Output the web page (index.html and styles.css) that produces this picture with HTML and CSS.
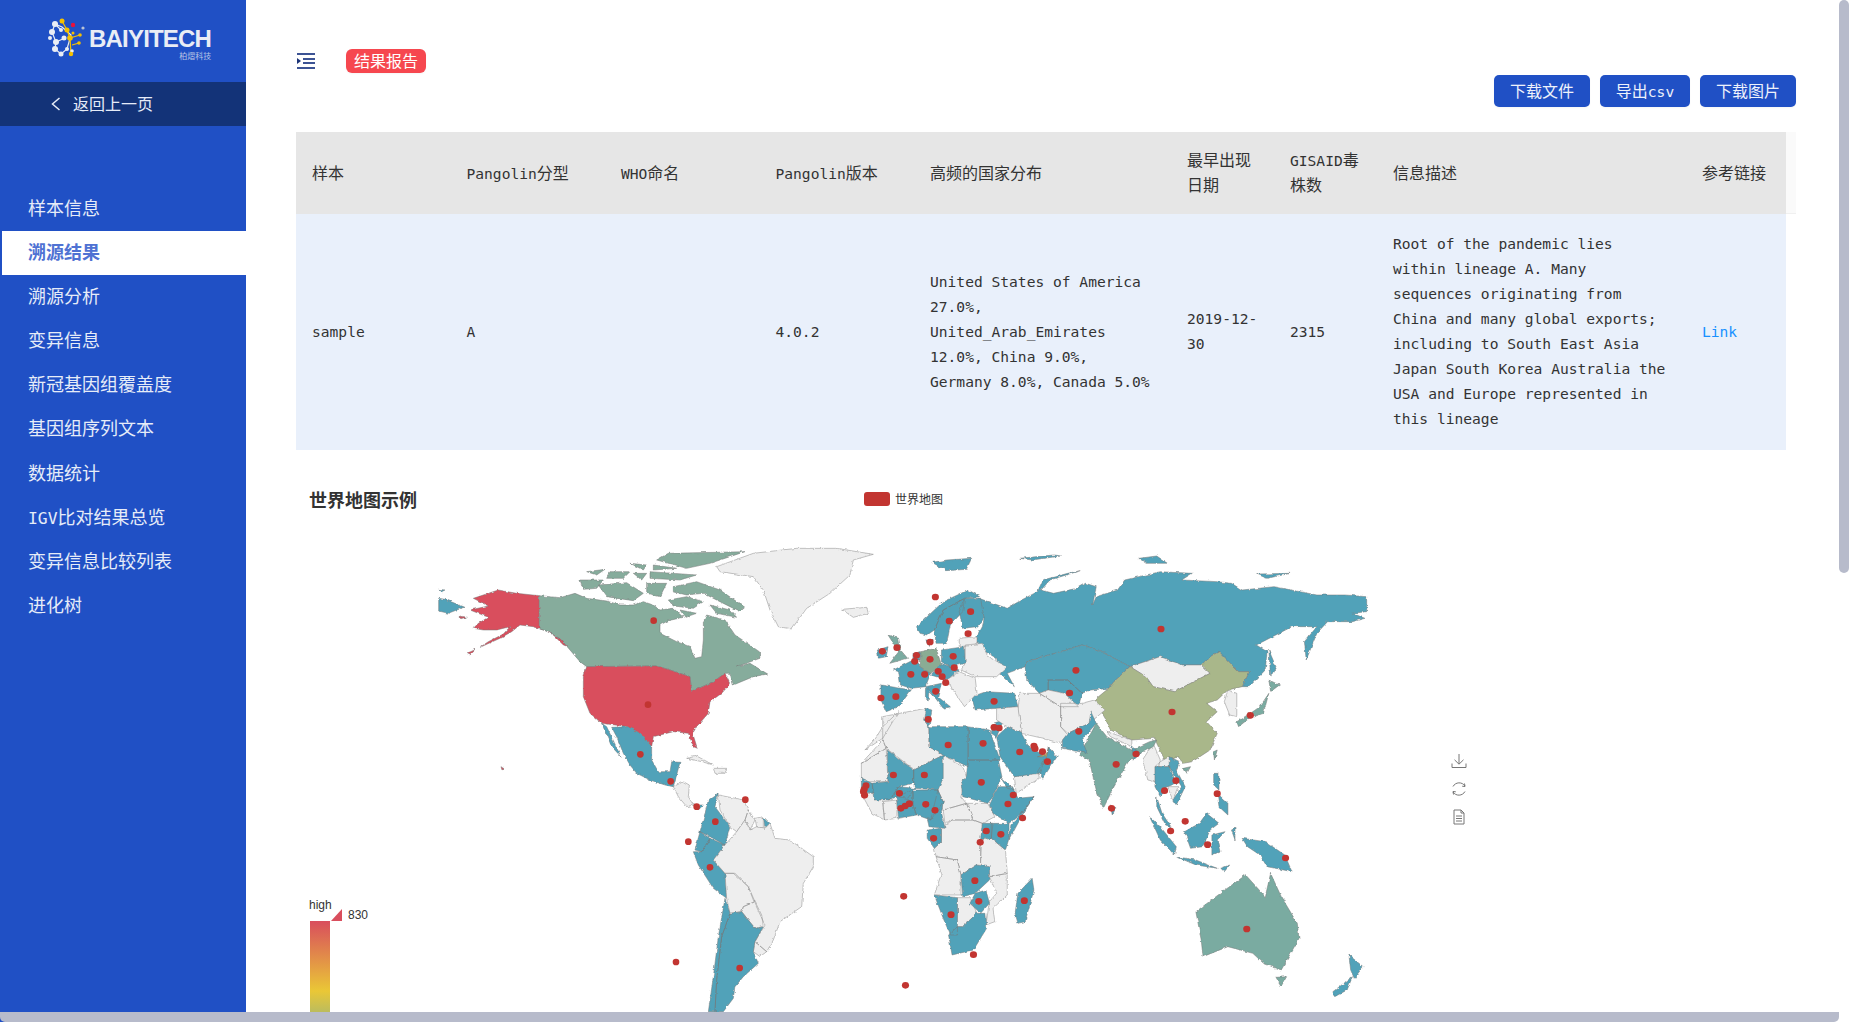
FILE: index.html
```html
<!DOCTYPE html>
<html lang="zh-CN">
<head>
<meta charset="utf-8">
<title>结果报告</title>
<link rel="stylesheet" href="styles.css">
</head>
<body>
<div class="app">
  <aside class="sidebar">
    <div class="logo">
      <svg class="logo-mark" viewBox="0 0 40 42" width="40" height="42">
        <g class="logo-w-l"><path d="M8 6 5 14 9 24 8 31 14 36 20 31 24 17 15 9ZM8 6 14 12M9 24 18 20"/></g>
        <g class="logo-y-l"><path d="M15 3 20 12 23 20 24 36M23 20 33 17M25 27 32 25"/></g>
        <g class="logo-w"><circle cx="8" cy="6" r="3"/><circle cx="5" cy="14" r="3"/><circle cx="9" cy="24" r="3"/><circle cx="3" cy="20" r="2"/><circle cx="8" cy="31" r="3"/><circle cx="14" cy="36" r="2.5"/><circle cx="20" cy="31" r="2"/><circle cx="17" cy="20" r="2.5"/><circle cx="14" cy="12" r="2"/><circle cx="25" cy="33" r="1.8"/></g>
        <g class="logo-y"><circle cx="15" cy="3" r="2.5"/><circle cx="20" cy="12" r="2.5"/><circle cx="23" cy="20" r="2.8"/><circle cx="24" cy="36" r="2.2"/><circle cx="33" cy="17" r="1.8"/><circle cx="32" cy="25" r="1.8"/><circle cx="26" cy="15" r="1.5"/></g>
        <circle class="logo-r" cx="26" cy="7" r="2.2"/>
        <circle class="logo-g" cx="36" cy="10" r="1.6"/>
      </svg>
      <div class="logo-words">
        <span class="logo-name">BAIYITECH</span>
        <span class="logo-sub">柏熠科技</span>
      </div>
    </div>
    <div class="back">
      <svg class="back-icon" viewBox="0 0 10 14" width="10" height="14"><path d="M8.5 1 1.5 7l7 6"/></svg>
      <span class="back-text">返回上一页</span>
    </div>
    <nav class="menu">
      <a class="menu-item">样本信息</a>
      <a class="menu-item active">溯源结果</a>
      <a class="menu-item">溯源分析</a>
      <a class="menu-item">变异信息</a>
      <a class="menu-item">新冠基因组覆盖度</a>
      <a class="menu-item">基因组序列文本</a>
      <a class="menu-item">数据统计</a>
      <a class="menu-item"><span class="lat">IGV</span>比对结果总览</a>
      <a class="menu-item">变异信息比较列表</a>
      <a class="menu-item">进化树</a>
    </nav>
  </aside>

  <main class="main">
    <div class="topbar">
      <svg class="toggle" viewBox="0 0 18 16" width="18" height="16">
        <path class="toggle-lines" d="M0 0h18v2H0zM6 5h12v2H6zM6 9h12v2H6zM0 14h18v2H0z"/>
        <path class="toggle-arrow" d="M0 5v6l4-3z"/>
      </svg>
      <span class="badge"><span class="badge-text">结果报告</span></span>
    </div>
    <div class="actions">
      <button class="btn"><span class="btn-text">下载文件</span></button>
      <button class="btn btn-mid"><span class="btn-text">导出<span class="lat">csv</span></span></button>
      <button class="btn"><span class="btn-text">下载图片</span></button>
    </div>

    <div class="table-head">
      <table class="table">
        <colgroup><col class="w154"><col class="w154"><col class="w154"><col class="w154"><col class="w257"><col class="w103"><col class="w103"><col class="w309"><col class="w100"></colgroup>
        <thead>
          <tr><th>样本</th><th><span class="lat">Pangolin</span>分型</th><th><span class="lat">WHO</span>命名</th><th><span class="lat">Pangolin</span>版本</th><th>高频的国家分布</th><th>最早出现日期</th><th><span class="lat">GISAID</span>毒<br>株数</th><th>信息描述</th><th>参考链接</th></tr>
        </thead>
      </table>
    </div>
    <table class="table table-body">
      <colgroup><col class="w154"><col class="w154"><col class="w154"><col class="w154"><col class="w257"><col class="w103"><col class="w103"><col class="w309"><col class="w100"></colgroup>
      <tbody>
        <tr>
          <td>sample</td><td>A</td><td></td><td>4.0.2</td>
          <td>United States of America 27.0%, United_Arab_Emirates 12.0%, China 9.0%, Germany 8.0%, Canada 5.0%</td>
          <td>2019-12-30</td><td>2315</td>
          <td>Root of the pandemic lies within lineage A. Many sequences originating from China and many global exports; including to South East Asia Japan South Korea Australia the USA and Europe represented in this lineage</td>
          <td><a class="link">Link</a></td>
        </tr>
      </tbody>
    </table>

    <section class="chart">
      <h3 class="chart-title">世界地图示例</h3>
      <div class="legend"><i class="legend-swatch"></i><span>世界地图</span></div>

      <svg class="map" viewBox="420 530 980 482" width="980" height="482">
        <defs>
          <filter id="rough" x="-3%" y="-3%" width="106%" height="106%" color-interpolation-filters="sRGB">
            <feTurbulence type="fractalNoise" baseFrequency=".07" numOctaves="3" seed="4" result="n"/>
            <feDisplacementMap in="SourceGraphic" in2="n" scale="9" xChannelSelector="R" yChannelSelector="G"/>
          </filter>
        </defs>
        <!-- Americas -->
        <g transform="translate(420 530) scale(.33333)">
          <g class="rough">
          <path class="low" d="M56 205 75 208 135 232 110 240 85 250 56 243ZM56 178 75 180 65 185Z"/>
          <path class="red" d="M358 197V296L385 305 420 325 445 350 430 345 400 315 370 298 340 290 300 285 275 305 240 325 180 352 205 335 250 312 270 290 230 300 190 300 160 295 175 280 205 262 150 240 205 228 160 205 235 180 290 190ZM120 258 142 262 125 266ZM142 368 165 358 150 372ZM243 710 252 716 246 720Z"/>
          <path class="can" d="M358 197 420 203 465 190 500 205 560 213 600 225 640 225 670 215 700 225 720 240 760 235 790 262 745 272 720 285 720 310 770 335 810 350 825 385 845 380 850 330 850 275 860 255 915 270 925 285 945 315 975 335 1018 365 1020 385 950 410 990 400 1043 432 1000 440 940 465 930 430 915 430 880 455 815 485 810 440 750 420 710 408 500 410 480 395 450 360 420 325 385 305 358 296Z"/>
          <path class="can" d="M760 170 830 155 900 180 975 232 960 245 900 215 850 190 800 195 760 185ZM535 165 620 158 670 190 640 212 560 200ZM480 150 550 150 530 175 490 178ZM745 70 975 65 870 100 800 115 710 90ZM500 125 555 118 530 135ZM570 125 630 125 610 145 560 145ZM630 100 680 105 670 120ZM690 125 830 135 780 150 690 145ZM780 240 830 250 795 262ZM680 160 740 160 720 200 680 190ZM640 130 680 130 665 150ZM700 105 770 115 700 120ZM745 210 800 200 850 215 820 235 760 228ZM870 225 930 240 950 262 890 250Z"/>
          <path class="none" d="M890 110 1000 70 1130 55 1250 55 1360 73 1300 90 1290 135 1230 190 1160 235 1115 297 1075 290 1050 240 1030 180 1000 140 900 125ZM1265 238 1340 232 1345 250 1300 262ZM800 685 830 678 880 705 845 695ZM880 715 920 715 915 730 885 730ZM760 770 790 755 808 765 805 800 820 825 800 830 775 800Z"/>
          <path class="red" d="M500 410 710 408 750 420 810 440 815 485 880 455 915 430 930 462 905 490 870 515 865 550 830 590 818 610 832 655 820 650 805 610 760 605 700 620 695 650 660 610 625 590 545 580 510 550 490 500 490 440Z"/>
          <path class="low" d="M575 592 625 590 660 610 695 650 695 690 715 725 750 725 755 695 780 697 770 735 760 770 735 765 690 750 650 730 630 705 610 670 590 620ZM545 580 560 590 603 680 575 650ZM820 825 850 825 835 840Z"/>
          <path class="low" d="M895 790 885 830 930 890 915 945 870 920 840 905 855 850 865 810ZM1030 860 1050 880 1035 895ZM840 905 870 925 845 965 825 960ZM870 925 915 945 880 990 915 1030 920 1105 880 1075 835 1005 820 965 845 965Z"/>
          <path class="none" d="M895 795 970 810 985 840 975 870 950 905 930 890 900 840ZM985 840 1005 870 990 900 975 870ZM1005 865 1030 860 1030 895 1010 890Z"/>
          <path class="none" d="M950 905 975 870 990 900 1010 890 1035 895 1050 880 1065 925 1110 930 1180 980 1180 1010 1150 1060 1145 1130 1080 1175 1060 1230 1040 1265 1005 1235 1035 1185 1000 1110 985 1070 940 1030 915 1030 880 990 915 945ZM915 1030 945 1030 985 1070 1005 1115 970 1130 965 1145 930 1150 920 1105ZM970 1130 1005 1115 1025 1155 1030 1190 1005 1195 965 1145ZM1005 1235 1040 1265 1020 1280 1000 1265Z"/>
          <path class="low" d="M930 1150 965 1145 1005 1195 1030 1190 1005 1235 1000 1265 1015 1300 970 1340 945 1370 940 1405 910 1445H885L890 1350 905 1220ZM915 1105 930 1150 905 1220 890 1350 885 1445H865L880 1340 895 1220Z"/>
          </g>
          <g class="dots"><circle cx="701" cy="272" r="9"/><circle cx="684" cy="524" r="9"/><circle cx="661" cy="673" r="9"/><circle cx="752" cy="754" r="9"/><circle cx="830" cy="830" r="9"/><circle cx="886" cy="875" r="9"/><circle cx="805" cy="935" r="9"/><circle cx="870" cy="1012" r="9"/><circle cx="976" cy="809" r="9"/><circle cx="959" cy="1314" r="9"/><circle cx="768" cy="1296" r="9"/></g>
        </g>
        <!-- Europe, Africa, Asia, Oceania -->
        <g transform="translate(840 530) scale(.35587 .33333)">
          <g class="rough">
          <path class="low" d="M258 97 300 90 370 85 355 118 300 122ZM505 85 600 75 620 78 540 90ZM840 85 890 78 920 100 860 100ZM1170 132 1265 130 1200 145Z"/>
          <path class="low" d="M400 290 405 265 390 205 470 235 510 210 555 185 570 150 640 130 675 122 590 150 565 180 600 190 665 175 690 160 720 170 710 225 720 200 780 180 800 150 900 125 990 130 960 150 1060 155 1100 160 1130 180 1220 170 1340 195 1420 195 1480 200V245L1440 250 1475 265 1440 275 1370 275 1340 310 1310 390 1305 335 1340 290 1270 290 1170 345 1200 365 1195 420 1150 470 1130 470 1150 425 1120 425 1065 365 1040 380 1015 405 960 405 900 380 815 410 770 385 725 360 680 345 620 365 525 395 520 410 470 430 490 470 450 430 440 385 385 350 385 320Z"/>
          <path class="low" d="M525 395 620 365 680 345 725 360 770 385 815 410 770 455 755 475 705 480 680 490 640 450 585 450 585 480 560 490 525 450 520 410ZM585 450 640 450 680 490 670 530 630 490 585 480ZM1205 360 1225 410 1210 440Z"/>
          <path class="none" d="M815 410 900 380 960 405 1015 405 1040 430 985 460 940 485 880 470 860 440Z"/>
          <path class="china" d="M815 410 860 440 880 470 940 485 985 460 1040 430 1015 405 1040 380 1065 365 1120 425 1150 425 1130 470 1090 480 1060 510 1030 520 1060 545 1030 575 1060 610 1040 660 990 695 965 700 950 680 915 695 890 640 885 625 820 630 760 600 745 565 715 510 755 475 770 455Z"/>
          <path class="none" d="M1090 480 1115 490 1115 560 1095 555 1080 515ZM505 490 560 490 620 530 620 590 640 615 620 640 570 625 510 610 500 540ZM620 520 680 520 715 510 745 540 700 580 640 610 620 590ZM560 490 585 480 630 490 670 530 620 530ZM750 605 820 630 820 650 760 620ZM880 640 900 690 885 755 865 750 850 690ZM900 695 925 680 945 720 925 710 885 710ZM920 770 950 770 935 810Z"/>
          <path class="mid" d="M1205 450 1235 465 1210 485ZM1205 490 1190 550 1150 565 1120 590 1115 575 1160 545 1180 530ZM965 715 985 710 975 730ZM1050 665 1060 660 1052 690ZM720 580 750 620 820 660 870 635 890 630 880 650 845 670 810 695 770 770 740 835 720 780 700 690 675 675 690 640Z"/>
          <path class="low" d="M640 610 700 580 705 545 720 580 680 630 695 670 625 655 625 630ZM820 650 845 670 825 690ZM760 825 775 835 765 855ZM885 710 925 710 945 760 920 770 900 800 885 770ZM925 680 955 695 945 720 970 770 945 825 935 810 960 770 925 710ZM890 800 905 850 930 890 915 885 890 830ZM870 860 900 890 945 950 940 975 900 930ZM945 980 1000 990 1060 1015 1000 1005ZM968 905 1010 880 1030 850 1065 880 1040 900 1020 950 985 955 975 925ZM1045 915 1082 905 1060 930 1068 965 1045 975ZM1050 730 1065 730 1065 780 1050 765ZM1060 790 1090 820 1090 855 1065 830ZM1130 925 1195 935 1250 975 1270 1025 1200 1010 1180 975 1145 950ZM1070 1015 1095 1005 1080 1025ZM1100 900 1110 895 1110 930Z"/>
          <path class="mid" d="M1000 1145 1075 1085 1140 1035 1195 1100 1210 1030 1240 1100 1285 1180 1290 1225 1240 1320 1190 1300 1160 1270 1090 1250 1020 1280 1015 1230ZM1225 1342 1255 1340 1240 1368Z"/>
          <path class="low" d="M1430 1275 1470 1310 1445 1345 1435 1320ZM1440 1340 1425 1380 1390 1400 1385 1385ZM540 1045 545 1080 520 1175 500 1180 492 1150 500 1090ZM240 475 250 475 248 510 240 505Z"/>
          <path class="low" d="M215 290 245 260 290 215 360 180 395 200 350 205 290 240 265 300 245 315 225 310ZM290 240 350 205 345 245 310 285 300 340 270 340 265 300ZM350 205 395 205 405 265 385 290 345 295 335 245ZM105 360 135 350 130 380 108 385ZM240 330 262 330 250 350ZM215 385 225 410 255 430 240 470 200 475 170 465 165 425 150 420ZM205 370 228 365 225 390 205 390ZM115 465 200 480 165 530 130 545 115 510ZM240 470 285 460 275 500 310 530 290 535 265 500ZM285 360 350 350 352 400 310 410 285 395ZM285 400 310 410 335 420 300 450 255 435ZM370 500 410 485 490 490 500 530 440 535 380 540ZM430 580 460 570 440 620 425 610Z"/>
          <path class="mid" d="M135 315 165 325 170 360 190 385 140 400 165 365Z"/>
          <path class="germany" d="M228 365 270 355 285 405 255 430 225 410Z"/>
          <path class="none" d="M352 345 400 340 415 380 470 410 440 440 380 440 340 420 352 400ZM335 325 385 320 385 345 335 350ZM300 450 335 425 380 445 385 490 350 530 330 500ZM440 535 500 530 510 610 470 590 440 570ZM490 740 555 725 560 745 495 790Z"/>
          <path class="low" d="M440 620 470 590 510 610 530 650 580 680 560 730 490 740 450 680ZM580 680 585 650 610 680 570 745 555 725Z"/>
          <path class="uae" d="M555 680 580 680 588 650 580 672Z"/>
          <!-- Africa -->
          <path class="none" d="M165 545 120 625 85 650 70 660 100 625 120 590ZM60 700 120 630 130 655 60 700ZM120 560 240 535 250 600V650L290 675 210 720 130 655 120 630ZM60 700 130 655 135 755H60ZM290 675 345 710 355 740 340 800 355 820 290 840 275 780ZM355 820 415 820 435 860 400 880 375 870ZM60 790H100L120 815 125 870 90 850ZM120 815 160 810V865L125 870ZM290 840 355 820 375 870H315L295 880ZM395 930 425 925 465 960 470 1030 425 1040 395 1000ZM285 895 315 870H375L400 880 395 1000 420 1040 385 1005 340 1035 330 990 270 980 265 955 285 935ZM270 980 330 990 340 1035V1095H265L285 1030ZM420 1040 470 1030V1095L430 1135 435 1175 410 1185 420 1115 440 1090ZM330 1103H365L385 1150 345 1190H328Z"/>
          <path class="low" d="M240 535 258 540 250 590 235 570ZM250 590H360V710L290 675 250 650ZM360 590 420 600 450 690H360ZM360 690H445L455 740 430 800 415 820 345 800 340 760 355 740ZM445 770H485L500 805 545 800 510 850 475 880 430 850 420 825ZM450 740 490 780 470 775ZM545 798 510 860 475 930 480 885 510 850ZM425 880H475V925L465 960 425 925ZM400 880H430L425 925 395 928ZM133 660 207 720V760L165 770 140 810H95L90 760 135 755ZM207 720 290 675V745L275 780 210 775 207 760ZM205 780H275L290 815 255 870 215 855 205 825ZM60 745 90 760 95 790 60 785ZM158 800 205 780V825L215 855 165 865ZM140 810 165 770 210 775 190 805 158 800ZM275 780 290 815 285 845 295 895 250 890 245 860 255 870ZM245 900 285 895V935L265 955 245 925ZM340 1035 385 1005 420 1010V1050L380 1090 345 1100ZM380 1090 410 1080 420 1120 395 1150 365 1120ZM265 1095 330 1103V1215H310L290 1165ZM330 1190H345L385 1150H410L412 1195 375 1260 315 1275 305 1215Z"/>
          </g>
          <g class="dots"><circle cx="268" cy="201" r="9"/><circle cx="367" cy="245" r="9"/><circle cx="307" cy="273" r="9"/><circle cx="360" cy="311" r="9"/><circle cx="253" cy="336" r="9"/><circle cx="160" cy="353" r="9"/><circle cx="119" cy="364" r="9"/><circle cx="215" cy="376" r="9"/><circle cx="210" cy="394" r="9"/><circle cx="253" cy="388" r="9"/><circle cx="318" cy="379" r="9"/><circle cx="321" cy="413" r="9"/><circle cx="276" cy="424" r="9"/><circle cx="238" cy="433" r="9"/><circle cx="199" cy="433" r="9"/><circle cx="287" cy="440" r="9"/><circle cx="297" cy="458" r="9"/><circle cx="157" cy="500" r="9"/><circle cx="115" cy="504" r="9"/><circle cx="269" cy="484" r="9"/><circle cx="248" cy="568" r="9"/><circle cx="433" cy="514" r="9"/><circle cx="433" cy="592" r="9"/><circle cx="447" cy="594" r="9"/><circle cx="545" cy="648" r="9"/><circle cx="548" cy="656" r="9"/><circle cx="569" cy="665" r="9"/><circle cx="583" cy="695" r="9"/><circle cx="505" cy="666" r="9"/><circle cx="671" cy="604" r="9"/><circle cx="663" cy="421" r="9"/><circle cx="645" cy="489" r="9"/><circle cx="902" cy="297" r="9"/><circle cx="933" cy="546" r="9"/><circle cx="1153" cy="556" r="9"/><circle cx="832" cy="672" r="9"/><circle cx="776" cy="703" r="9"/><circle cx="763" cy="835" r="9"/><circle cx="944" cy="752" r="9"/><circle cx="912" cy="782" r="9"/><circle cx="1060" cy="791" r="9"/><circle cx="970" cy="874" r="9"/><circle cx="929" cy="903" r="9"/><circle cx="1033" cy="944" r="9"/><circle cx="1252" cy="984" r="9"/><circle cx="1143" cy="1197" r="9"/><circle cx="304" cy="645" r="9"/><circle cx="402" cy="640" r="9"/><circle cx="397" cy="757" r="9"/><circle cx="150" cy="735" r="9"/><circle cx="237" cy="735" r="9"/><circle cx="167" cy="790" r="9"/><circle cx="73" cy="767" r="9"/><circle cx="68" cy="778" r="9"/><circle cx="66" cy="785" r="9"/><circle cx="69" cy="796" r="9"/><circle cx="171" cy="835" r="9"/><circle cx="183" cy="828" r="9"/><circle cx="195" cy="821" r="9"/><circle cx="241" cy="823" r="9"/><circle cx="267" cy="841" r="9"/><circle cx="263" cy="925" r="9"/><circle cx="487" cy="795" r="9"/><circle cx="472" cy="822" r="9"/><circle cx="513" cy="864" r="9"/><circle cx="411" cy="903" r="9"/><circle cx="452" cy="913" r="9"/><circle cx="394" cy="937" r="9"/><circle cx="379" cy="1052" r="9"/><circle cx="390" cy="1114" r="9"/><circle cx="312" cy="1154" r="9"/><circle cx="518" cy="1112" r="9"/><circle cx="375" cy="1274" r="9"/><circle cx="179" cy="1099" r="9"/><circle cx="184" cy="1366" r="9"/></g>
        </g>
      </svg>

      <div class="vmap">
        <span class="vmap-high">high</span>
        <i class="vmap-bar"></i>
        <svg class="vmap-handle" viewBox="0 0 11 12" width="11" height="12"><path d="M0 12 11 0V12Z"/></svg>
        <span class="vmap-val">830</span>
      </div>

      <div class="tools">
        <svg viewBox="0 0 16 16" width="16" height="16"><path d="M8 1v10M3.500 6.800 8 11.200l4.500-4.400M1 10.500v4h14v-4"/></svg>
        <svg viewBox="0 0 16 16" width="16" height="16"><path d="M2 5.500A7 7 0 0 1 14 5M14 10.500A7 7 0 0 1 2 11M13.500 2.500 14 5.500l-2.800-.3M2.500 13.500 2 10.500l2.800.3"/></svg>
        <svg viewBox="0 0 16 16" width="16" height="16"><path d="M3 1h7l3 3v11H3zM10 1v3h3M5 7h6M5 9.500h6M5 12h6"/></svg>
      </div>
    </section>
  </main>
</div>
<div class="scroll-v"></div>
<div class="scroll-h"></div>
</body>
</html>
```
FILE: styles.css
```css
* { box-sizing: border-box; }
html, body { margin: 0; height: 100%; overflow: hidden; background: #fff; }
body {
  position: relative;
  font-family: "DejaVu Sans Mono", "Noto Sans CJK SC", monospace;
  font-size: 14.6px;
  color: #333;
}
.app { display: flex; height: 1022px; }

/* sidebar */
.sidebar { flex: 0 0 246px; background: #2050c5; color: #fff; }
.logo { height: 82px; display: flex; align-items: flex-start; padding: 18px 0 0 47px; gap: 2px; }
.logo-mark { flex: none; }
.logo-w-l path, .logo-y-l path { fill: none; stroke-width: 1.2; }
.logo-w-l path { stroke: #e9edf5; }
.logo-y-l path { stroke: #f5c000; }
.logo-w circle { fill: #e9edf5; }
.logo-y circle { fill: #f5c000; }
.logo-r { fill: #e8123c; }
.logo-g { fill: #b9c3d6; }
.logo-words { display: flex; flex-direction: column; align-items: flex-end; margin-top: 9px; }
.logo-name {
  font-family: "Liberation Sans", sans-serif;
  font-weight: 700;
  font-size: 24px;
  line-height: 24px;
  letter-spacing: -.8px;
  color: #e9edf5;
}
.logo-sub { font-family: "Noto Sans CJK SC", sans-serif; font-size: 8px; line-height: 8px; color: #b9c6e6; margin-top: 1px; }
.back {
  height: 44px;
  background: #133378;
  display: flex;
  align-items: center;
  padding-left: 51px;
  gap: 12px;
  font-size: 16px;
  color: #e6ecf8;
}
.back-text { position: relative; top: -1px; }
.back-icon path { fill: none; stroke: #e6ecf8; stroke-width: 1.500; }
.menu { margin-top: 61px; display: flex; flex-direction: column; padding-left: 2px; }
.menu-item { height: 44.100px; line-height: 44px; padding-left: 26px; font-size: 18px; color: #e6ecf8; }
.menu-item .lat { font-size: 16.400px; }
.menu-item.active { background: #fff; color: #4f72d3; font-weight: 700; }
.lat { font-size: 14.600px; }

/* main */
.main { flex: 1; min-width: 0; padding: 49px 53px 0 50px; overflow: hidden; }
.topbar { display: flex; align-items: center; height: 24px; gap: 31px; padding-left: 1px; }
.toggle-lines { fill: #3c5394; }
.toggle-arrow { fill: #1c3478; }
.badge {
  background: #f6474f;
  color: #fff;
  border-radius: 6px;
  height: 24px;
  line-height: 24px;
  padding: 0 8px;
  font-size: 16px;
  box-shadow: 0 1px 2px rgba(0, 0, 0, .04);
}
.badge-text { position: relative; top: 1px; }
.actions { display: flex; justify-content: flex-end; gap: 10px; margin-top: 2px; height: 32px; }
.btn {
  width: 96px;
  height: 32px;
  border: 0;
  border-radius: 5px;
  background: #2050c5;
  color: #eef2fb;
  font: 16px "DejaVu Sans Mono", "Noto Sans CJK SC", monospace;
  padding: 0;
  box-shadow: 0 1px 2px rgba(0, 0, 0, .04);
}
.btn-text { position: relative; top: -1px; }
.btn-mid { width: 90px; }

/* table */
.table { border-collapse: collapse; table-layout: fixed; width: 1490px; }
.w154 { width: 154.500px; }
.w257 { width: 257px; }
.w103 { width: 103px; }
.w100 { width: 100px; }
.w309 { width: 309px; }
.table-head { margin-top: 25px; background: #fafafa; border-bottom: 1px solid #f0f0f0; height: 82px; }
.table th, .table td { padding: 16px; line-height: 25px; text-align: left; font-weight: 400; overflow-wrap: break-word; }
.table th { background: #e6e6e6; height: 82px; font-size: 16px; }
.table-body td { background: #e9f0fb; height: 236px; padding: 17px 16px 19px; }
.table-body { margin-top: 0; }
.link { color: #1890ff; }

/* chart */
.chart { position: relative; height: 600px; }
.chart-title {
  position: absolute;
  left: 13px;
  top: 36px;
  margin: 0;
  font: 700 18px/26px "Noto Sans CJK SC", sans-serif;
  color: #333;
}
.legend {
  position: absolute;
  left: 568px;
  top: 42px;
  display: flex;
  align-items: center;
  gap: 5px;
  font: 12px/14px "Noto Sans CJK SC", sans-serif;
  color: #333;
}
.legend-swatch { width: 26px; height: 14px; border-radius: 3px; background: #c23531; }
.map { position: absolute; left: 124px; top: 80px; overflow: hidden; }
.rough { filter: url(#rough); }
.map path { stroke: #777; stroke-width: .5px; vector-effect: non-scaling-stroke; stroke-linejoin: round; }
.map .low { fill: #51a2b9; }
.map .red { fill: #d94e5d; }
.map .can { fill: #86ac9c; }
.map .mid { fill: #7aaba1; }
.map .china { fill: #a9b78a; }
.map .germany { fill: #8aac94; }
.map .uae { fill: #c8b05a; }
.map .none { fill: #eee; stroke: #888; }
.dots circle { fill: #c23531; r: 10px; }

.vmap { position: absolute; left: 13px; top: 450px; width: 100px; height: 162px; font: 12px/14px "Liberation Sans", sans-serif; color: #333; }
.vmap-high { position: absolute; left: 0; top: -2px; }
.vmap-bar {
  position: absolute;
  left: 1px;
  top: 21px;
  width: 20px;
  height: 140px;
  background: linear-gradient(#d94e5d, #eac736 50%, #50a3ba);
}
.vmap-handle { position: absolute; left: 22px; top: 9px; }
.vmap-handle path { fill: #d94e5d; }
.vmap-val { position: absolute; left: 39px; top: 8px; }

.tools { position: absolute; left: 1155px; top: 303px; display: flex; flex-direction: column; gap: 12px; }
.tools svg { display: block; }
.tools path { fill: none; stroke: #777; stroke-width: 1; }

/* scrollbars */
.scroll-v { position: absolute; right: 0; top: 0; width: 10px; height: 573px; background: #b7bbcb; border-radius: 5px; }
.scroll-h { position: absolute; left: 0; bottom: 0; width: 1839px; height: 10px; background: #b7bbcb; border-radius: 0 0 5px 5px; }
```
